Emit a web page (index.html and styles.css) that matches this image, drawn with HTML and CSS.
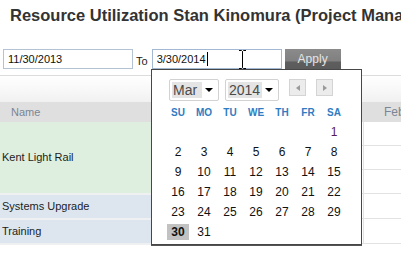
FILE: index.html
```html
<!DOCTYPE html>
<html lang="en">

<head>
    <meta charset="UTF-8">
    <meta name="viewport" content="width=device-width, initial-scale=1.0">
    <title>Resource Utilization</title>
    <link rel="stylesheet" href="styles.css">
</head>

<body>
    <h1 class="title">Resource Utilization Stan Kinomura (Project Manager)</h1>

    <div class="filters">
        <div class="field">11/30/2013</div>
        <span class="to">To</span>
        <div class="field field-active">3/30/2014<span class="caret"></span></div>
        <button class="apply" type="button">Apply</button>
    </div>

    <div class="toolbar"></div>

    <table class="grid">
        <colgroup>
            <col class="col-name">
            <col class="col-mid">
            <col class="col-month">
        </colgroup>
        <thead>
            <tr>
                <th class="name-head">Name</th>
                <th></th>
                <th class="month-head">Feb</th>
            </tr>
        </thead>
        <tbody>
            <tr>
                <td class="project project-green" rowspan="3">Kent Light Rail</td>
                <td></td>
                <td class="cell"></td>
            </tr>
            <tr>
                <td></td>
                <td class="cell"></td>
            </tr>
            <tr>
                <td></td>
                <td class="cell"></td>
            </tr>
            <tr>
                <td class="project project-blue">Systems Upgrade</td>
                <td></td>
                <td class="cell"></td>
            </tr>
            <tr>
                <td class="project project-blue">Training</td>
                <td></td>
                <td class="cell"></td>
            </tr>
        </tbody>
    </table>

    <!-- date picker popup, open over the table -->
    <div class="picker">
        <div class="picker-nav">
            <div class="select select-month"><span>Mar</span><i class="arrow"></i></div>
            <div class="select select-year"><span>2014</span><i class="arrow"></i></div>
            <div class="nav-btn"><i class="tri-left"></i></div>
            <div class="nav-btn"><i class="tri-right"></i></div>
        </div>
        <div class="days">
            <span class="dow">SU</span><span class="dow">MO</span><span class="dow">TU</span><span class="dow">WE</span><span class="dow">TH</span><span class="dow">FR</span><span class="dow">SA</span>

            <span></span><span></span><span></span><span></span><span></span><span></span><span class="first">1</span>
            <span>2</span><span>3</span><span>4</span><span>5</span><span>6</span><span>7</span><span>8</span>
            <span>9</span><span>10</span><span>11</span><span>12</span><span>13</span><span>14</span><span>15</span>
            <span>16</span><span>17</span><span>18</span><span>19</span><span>20</span><span>21</span><span>22</span>
            <span>23</span><span>24</span><span>25</span><span>26</span><span>27</span><span>28</span><span>29</span>
            <span><b class="selected">30</b></span><span>31</span>
        </div>
    </div>

    <!-- mouse pointer -->
    <svg class="ibeam" width="9" height="19" viewBox="0 0 9 19">
        <path d="M1 0.5h2.5l1 1 1-1h2.5M4.5 1.5v16M1 18.5h2.5l1-1 1 1h2.5" fill="none" stroke="#000" stroke-width="1" />
    </svg>
</body>

</html>
```

FILE: styles.css
```css
body {
    margin: 0;
    font-family: "Liberation Sans", Arial, sans-serif;
    color: #222;
    overflow: hidden;
    position: relative;
    height: 267px;
}

.title {
    margin: 0;
    padding: 5px 0 0 10px;
    font-size: 16.5px;
    line-height: 20px;
    color: #333;
    white-space: nowrap;
}

.filters {
    display: flex;
    align-items: center;
    margin-top: 24px;
    padding-left: 3px;
    font-size: 11px;
}

.field {
    box-sizing: border-box;
    width: 130px;
    height: 20px;
    line-height: 18px;
    padding-left: 4px;
    border: 1px solid #b4c3d3;
    background: #fff;
    color: #111;
}

.field-active {
    border-color: #a3b9d3;
}

.caret {
    display: inline-block;
    width: 1px;
    height: 14px;
    margin-left: 1px;
    vertical-align: -3px;
    background: #000;
}

.to {
    margin: 4px 4px 0 3px;
    font-size: 11px;
    color: #222;
}

.apply {
    box-sizing: border-box;
    width: 56px;
    height: 20px;
    margin-left: 3px;
    padding: 0;
    border: 0;
    font-family: inherit;
    font-size: 12px;
    color: #e4e4e4;
    background: linear-gradient(#8b8b8b 0, #808080 60%, #5e5e5e 65%, #5a5a5a 100%);
}

.toolbar {
    height: 26px;
    margin-top: 6px;
    border-top: 1px solid #dcdcdc;
    background: linear-gradient(#fff, #f1f1f1);
}

.grid {
    border-collapse: collapse;
    table-layout: fixed;
    width: 480px;
    font-size: 11px;
}

.col-name {
    width: 165px;
}

.col-mid {
    width: 198px;
}

.grid th {
    height: 20px;
    padding: 0;
    background: #dfdfdf;
    font-weight: normal;
    text-align: left;
    color: #7b8595;
}

.name-head {
    padding-left: 11px !important;
}

.month-head {
    padding-left: 21px !important;
    font-size: 12px;
}

.grid td {
    height: 23px;
    padding: 0;
    border-bottom: 1px solid #e2e2e2;
}

.project {
    padding-left: 2px !important;
    color: #1c1c1c;
    border-bottom: 2px solid #eef0f2 !important;
}

.project-green {
    background: #dfefdf;
}

.project-blue {
    background: #dde6ef;
}

.cell {
    border-left: 1px solid #e0e0ef;
}

.picker {
    position: absolute;
    left: 151px;
    top: 69px;
    box-sizing: border-box;
    width: 211px;
    height: 176px;
    border: 1px solid #474747;
    box-shadow: 0 1px 0 #555;
    background: #fff;
}

.picker-nav {
    display: flex;
    align-items: flex-start;
    margin: 9px 0 0 17px;
}

.select {
    box-sizing: border-box;
    display: flex;
    align-items: center;
    height: 22px;
    padding: 0 5px 0 2px;
    border: 1px solid #d2d2d2;
    border-radius: 2px;
    font-size: 14px;
    color: #4a4a4a;
}

.select span {
    padding: 0 1px;
    line-height: 16px;
    background: #e4e4e4;
}

.select-month {
    width: 50px;
}

.select-month span {
    width: 28px;
}

.select-year {
    width: 54px;
    margin-left: 6px;
}

.select-year span {
    width: 32px;
}

.arrow {
    margin-left: auto;
    width: 0;
    height: 0;
    border-left: 4px solid transparent;
    border-right: 4px solid transparent;
    border-top: 4px solid #000;
}

.nav-btn {
    box-sizing: border-box;
    display: flex;
    align-items: center;
    justify-content: center;
    width: 17px;
    height: 17px;
    margin-left: 10px;
    border: 1px solid #d4d4d4;
    background: #ececec;
}

.tri-left,
.tri-right {
    width: 0;
    height: 0;
    border-top: 3px solid transparent;
    border-bottom: 3px solid transparent;
}

.tri-left {
    border-right: 4px solid #9a9a9a;
}

.tri-right {
    border-left: 4px solid #9a9a9a;
}

.days {
    display: grid;
    grid-template-columns: repeat(7, 26px);
    grid-auto-rows: 20px;
    margin: 1px 0 0 13px;
    font-size: 12px;
    color: #111;
}

.days span {
    display: flex;
    align-items: center;
    justify-content: center;
}

.days .dow {
    font-size: 10px;
    font-weight: bold;
    color: #2f7cc2;
}

.days .first {
    color: #5a1a55;
}

.selected {
    padding: 0 4px;
    line-height: 16px;
    background: #c2c2c2;
}

.ibeam {
    position: absolute;
    left: 238px;
    top: 50px;
}
```
